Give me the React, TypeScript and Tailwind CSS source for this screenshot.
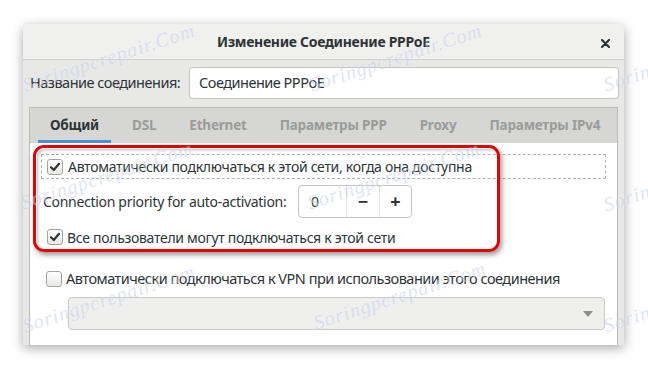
import React from "react";

// watermark: baseline-left starting points
const marks = [
  { x: 25, y: 92 },
  { x: 312, y: 92 },
  { x: 606, y: 92 },
  { x: 23, y: 210 },
  { x: 310, y: 210 },
  { x: 606, y: 212 },
  { x: 25, y: 333 },
  { x: 316, y: 330 },
  { x: 606, y: 333 },
];

function Check({ checked }: { checked: boolean }) {
  return (
    <span className="flex h-[16px] w-[16px] shrink-0 items-center justify-center rounded-[3px] border border-[#a3a3a0] bg-gradient-to-b from-white to-[#e8e8e7]">
      {checked && (
        <svg width="12" height="12" viewBox="0 0 12 12">
          <path d="M2 6.3 L4.8 9 L10 2.8" fill="none" stroke="#2e3436" strokeWidth="2.2" strokeLinecap="round" strokeLinejoin="round" />
        </svg>
      )}
    </span>
  );
}

const tabs = ["Общий", "DSL", "Ethernet", "Параметры PPP", "Proxy", "Параметры IPv4"];

export default function App() {
  return (
    <div className="relative h-[369px] w-[648px] overflow-hidden bg-white pl-[23px] pt-[24px] font-['Noto_Sans',sans-serif] text-[#2e3436]">
      <div className="flex h-[321px] w-[601px] flex-col rounded-t-[6px] bg-[#e8e8e7] shadow-[0_3px_12px_rgba(0,0,0,0.35)]">
        {/* title bar */}
        <div className="relative flex h-[36px] shrink-0 items-center justify-center rounded-t-[6px] border-b border-[#cfcfcd] bg-[#f0f0ef]">
          <span className="text-[14px] font-bold tracking-[-0.3px]">Изменение Соединение PPPoE</span>
          <svg className="absolute right-[14px] top-[15px]" width="9" height="9" viewBox="0 0 9 9">
            <path d="M1 1 L8 8 M8 1 L1 8" stroke="#2e3436" strokeWidth="2.2" strokeLinecap="round" />
          </svg>
        </div>

        {/* name row */}
        <div className="flex items-center pl-[7px] pr-[5px] pt-[7px]">
          <span className="w-[159px] whitespace-nowrap text-[14.5px] tracking-[-0.5px]">Название соединения:</span>
          <div className="flex h-[32px] flex-1 items-center rounded-[4px] border border-[#c4c4c1] bg-white pl-[9px] text-[14.5px] tracking-[-0.5px]">
            Соединение PPPoE
          </div>
        </div>

        {/* notebook */}
        <div className="ml-[6px] mr-[6px] mt-[8px] flex flex-1 flex-col border border-b-0 border-[#b9b9b6]">
          <div className="flex h-[35px] shrink-0 items-stretch gap-[9px] bg-[#d6d6d5] pl-[8px]">
            {tabs.map((t, i) => (
              <div
                key={t}
                className={
                  i === 0
                    ? "flex items-center whitespace-nowrap border-b-[3px] border-[#4a90d9] px-[12px] pt-[3px] text-[13.5px] font-bold tracking-[-0.2px] text-[#2e3436]"
                    : "flex items-center whitespace-nowrap border-b-[3px] border-transparent px-[12px] pt-[3px] text-[13.5px] font-bold tracking-[-0.2px] text-[#9a9c9a]"
                }
              >
                {t}
              </div>
            ))}
          </div>

          <div className="relative flex flex-1 flex-col bg-white pt-[11px] text-[14px]">
            <div className="ml-[11px] mr-[11px] flex h-[25px] items-center gap-[5px] border border-dashed border-[#b0b0ae] pl-[5px]">
              <Check checked />
              <span className="whitespace-nowrap tracking-[-0.3px]">Автоматически подключаться к этой сети, когда она доступна</span>
            </div>

            <div className="mt-[6px] flex items-center gap-[12px] pl-[13px]">
              <span className="w-[243px] whitespace-nowrap tracking-[-0.3px]">Connection priority for auto-activation:</span>
              <div className="flex h-[33px] w-[114px] overflow-hidden rounded-[4px] border border-[#c4c4c1] bg-white">
                <div className="flex w-[48px] items-center pl-[12px]">0</div>
                <div className="flex w-[33px] items-center justify-center border-l border-[#e2e2e0] text-[18px] font-bold">−</div>
                <div className="flex w-[33px] items-center justify-center border-l border-[#e2e2e0] text-[18px] font-bold">+</div>
              </div>
            </div>

            <div className="mt-[10px] flex h-[18px] items-center gap-[4px] pl-[17px]">
              <Check checked />
              <span className="whitespace-nowrap tracking-[-0.3px]">Все пользователи могут подключаться к этой сети</span>
            </div>

            <div className="mt-[24px] flex h-[18px] items-center gap-[4px] pl-[16px] text-[14.5px]">
              <Check checked={false} />
              <span className="whitespace-nowrap tracking-[-0.5px]">Автоматически подключаться к VPN при использовании этого соединения</span>
            </div>

            <div className="ml-[38px] mr-[12px] mt-[9px] flex h-[33px] items-center justify-end rounded-[4px] border border-[#c8c8c6] bg-[#efefee] pr-[11px]">
              <svg width="10" height="6" viewBox="0 0 10 6">
                <path d="M0 0 L10 0 L5 6 Z" fill="#8b8e8f" />
              </svg>
            </div>

            {/* red highlight */}
            <div className="pointer-events-none absolute left-[3px] top-[2px] h-[107px] w-[467px] rounded-[11px] border-[3px] border-[#e60000] shadow-[2px_3px_5px_rgba(0,0,0,0.4),inset_1px_1px_0_#ffffff,inset_2px_2px_3px_rgba(0,0,0,0.25)]" />
          </div>
        </div>
      </div>

      {/* watermark */}
      {marks.map((m, i) => (
        <span
          key={i}
          className="pointer-events-none absolute origin-left -rotate-[18deg] whitespace-nowrap font-['Liberation_Serif',serif] text-[20px] italic leading-[28px] tracking-[1px] text-[#c3cce6] opacity-50 [text-shadow:0_0_1px_#ffffff]"
          style={{ left: m.x - 2, top: m.y - 21 }}
        >
          Soringpcrepair.Com
        </span>
      ))}
    </div>
  );
}
